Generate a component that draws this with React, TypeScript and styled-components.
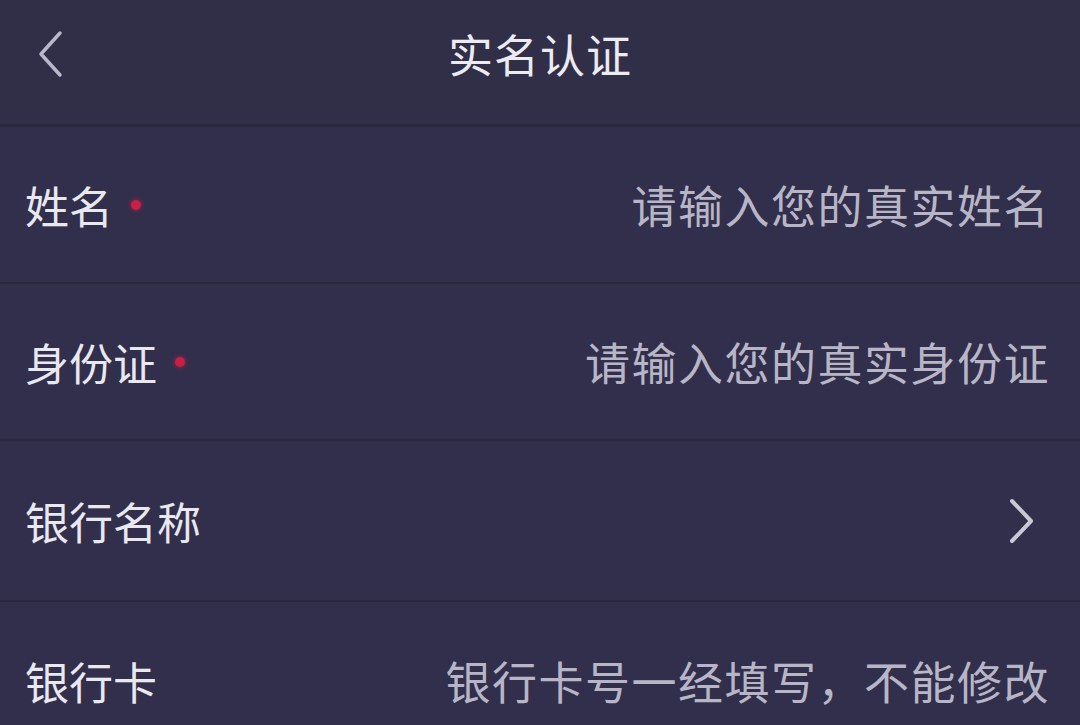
import React from "react";
import styled, { createGlobalStyle } from "styled-components";

const GlobalStyle = createGlobalStyle`
  html, body {
    margin: 0;
    padding: 0;
    background: #322f4c;
  }
  body {
    font-family: "Noto Sans CJK SC", "Noto Sans", sans-serif;
    -webkit-font-smoothing: antialiased;
  }
`;

const Page = styled.div`
  width: 1080px;
  height: 725px;
  overflow: hidden;
  background: #322f4c;
  display: flex;
  flex-direction: column;
`;

const NavBar = styled.header`
  height: 127px;
  flex-shrink: 0;
  display: grid;
  grid-template-columns: 120px 1fr 120px;
  align-items: center;
  background: #302f47;
  border-bottom: 3px solid #29283c;
  box-sizing: border-box;
`;

const BackButton = styled.button`
  border: none;
  background: none;
  padding: 0 0 16px 36px;
  display: flex;
  align-items: center;
  cursor: pointer;
`;

const Title = styled.h1`
  margin: 0 0 17px;
  text-align: center;
  font-size: 45px;
  font-weight: 400;
  color: #ecebf2;
  letter-spacing: 1px;
`;

const Form = styled.div`
  display: flex;
  flex-direction: column;
`;

const Row = styled.div<{ $tall?: boolean; $last?: boolean }>`
  height: ${(p) => (p.$tall ? "161px" : "157px")};
  flex-shrink: 0;
  display: flex;
  align-items: center;
  justify-content: space-between;
  padding: 0 30px 0 25px;
  box-sizing: border-box;
  border-bottom: ${(p) => (p.$last ? "none" : "2px solid #2a283f")};
`;

const Label = styled.div`
  display: flex;
  align-items: center;
  gap: 18px;
  font-size: 44px;
  color: #e9e8ef;
`;

const Required = styled.span`
  width: 10px;
  height: 10px;
  border-radius: 50%;
  background: #c81f45;
  box-shadow: 0 0 4px 1px rgba(200, 31, 69, 0.5);
`;

const Placeholder = styled.div`
  font-size: 45px;
  letter-spacing: 1.5px;
  color: #b8b6c6;
`;

const Chevron = styled.svg`
  margin-right: 14px;
`;

function BackIcon() {
  return (
    <svg width="30" height="48" viewBox="0 0 30 48">
      <path d="M24 3 L5 24 L24 45" fill="none" stroke="#b9b8c9" strokeWidth="3.5" strokeLinecap="round" strokeLinejoin="round" />
    </svg>
  );
}

function ArrowIcon() {
  return (
    <Chevron width="30" height="48" viewBox="0 0 30 48">
      <path d="M6 4 L25 24 L6 44" fill="none" stroke="#c9c8d6" strokeWidth="4" strokeLinecap="round" strokeLinejoin="round" />
    </Chevron>
  );
}

const fields = [
  { label: "姓名", required: true, hint: "请输入您的真实姓名" },
  { label: "身份证", required: true, hint: "请输入您的真实身份证" },
  { label: "银行名称", arrow: true },
  { label: "银行卡", hint: "银行卡号一经填写，不能修改" },
];

export default function App() {
  return (
    <Page>
      <GlobalStyle />
      <NavBar>
        <BackButton aria-label="back">
          <BackIcon />
        </BackButton>
        <Title>实名认证</Title>
        <div />
      </NavBar>
      <Form>
        {fields.map((f, i) => (
          <Row key={f.label} $tall={!!f.arrow} $last={i === fields.length - 1}>
            <Label>
              {f.label}
              {f.required && <Required />}
            </Label>
            {f.hint && <Placeholder>{f.hint}</Placeholder>}
            {f.arrow && <ArrowIcon />}
          </Row>
        ))}
      </Form>
    </Page>
  );
}
